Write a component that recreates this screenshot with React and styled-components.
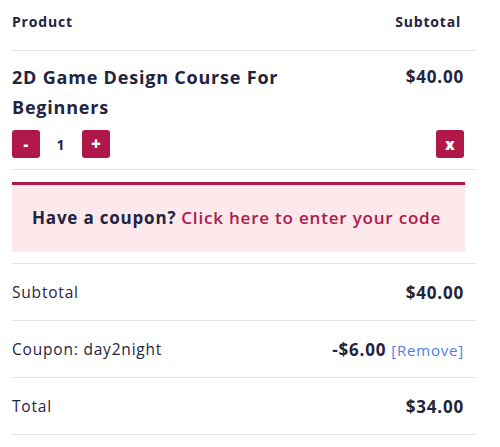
import React, { useState } from "react";
import styled, { createGlobalStyle } from "styled-components";

const GlobalStyle = createGlobalStyle`
  body {
    margin: 0;
    background: #ffffff;
    font-family: "Open Sans", "Noto Sans", sans-serif;
    letter-spacing: 0.8px;
    color: #1f2440;
  }
`;

const brand = "#b0184a";
const line = "#e6e6e6";

const Wrapper = styled.div`
  width: 465px;
  margin-left: 12px;
`;

const HeadRow = styled.div`
  display: flex;
  justify-content: space-between;
  height: 51px;
  box-sizing: border-box;
  padding: 12px 16px 0 0;
  border-bottom: 1px solid ${line};
  font-size: 14px;
  font-weight: 700;
`;

const ProductRow = styled.div`
  display: flex;
  justify-content: space-between;
  padding: 11px 13px 11px 0;
  border-bottom: 1px solid ${line};
`;

const ProductInfo = styled.div`
  display: flex;
  flex-direction: column;
  gap: 8px;
`;

const Title = styled.div`
  width: 300px;
  font-size: 18px;
  font-weight: 700;
  line-height: 30px;
`;

const Price = styled.div`
  font-size: 17px;
  font-weight: 700;
  line-height: 30px;
`;

const SideCol = styled.div`
  display: flex;
  flex-direction: column;
  justify-content: space-between;
  align-items: flex-end;
`;

const Qty = styled.div`
  display: flex;
  align-items: center;
`;

const QtyValue = styled.span`
  width: 42px;
  text-align: center;
  font-size: 14px;
  font-weight: 700;
`;

const SquareButton = styled.button`
  width: 28px;
  height: 28px;
  padding: 0;
  border: none;
  border-radius: 3px;
  background: ${brand};
  color: #ffffff;
  font-family: inherit;
  font-size: ${({ $big }) => ($big ? "17px" : "15px")};
  font-weight: 800;
  line-height: 28px;
  cursor: pointer;
`;

const CouponSection = styled.div`
  padding: 12px 0 11px;
  border-bottom: 1px solid ${line};
`;

const CouponBox = styled.div`
  width: 453px;
  box-sizing: border-box;
  height: 70px;
  display: flex;
  align-items: center;
  padding: 0 0 2px 20px;
  background: #fde8ec;
  border-top: 3px solid ${brand};
  font-size: 17px;
  font-weight: 700;
  color: #1f2440;
`;

const CouponLink = styled.a`
  color: ${brand};
  font-weight: 600;
  margin-left: 5px;
  text-decoration: none;
  cursor: pointer;
`;

const TotalRow = styled.div`
  display: flex;
  justify-content: space-between;
  align-items: center;
  height: 57px;
  box-sizing: border-box;
  padding-right: 13px;
  border-bottom: 1px solid ${line};
  font-size: 15.5px;
`;

const Amount = styled.span`
  font-size: 17px;
  font-weight: 700;
`;

const RemoveLink = styled.a`
  color: #4b7fe6;
  font-size: 15px;
  font-weight: 400;
  margin-left: 5px;
  cursor: pointer;
`;

export default function App() {
  const [qty, setQty] = useState(1);

  return (
    <>
      <GlobalStyle />
      <Wrapper>
        <HeadRow>
          <span>Product</span>
          <span>Subtotal</span>
        </HeadRow>
        <ProductRow>
          <ProductInfo>
            <Title>2D Game Design Course For Beginners</Title>
            <Qty>
              <SquareButton onClick={() => setQty(Math.max(1, qty - 1))}>-</SquareButton>
              <QtyValue>{qty}</QtyValue>
              <SquareButton $big onClick={() => setQty(qty + 1)}>+</SquareButton>
            </Qty>
          </ProductInfo>
          <SideCol>
            <Price>$40.00</Price>
            <SquareButton>x</SquareButton>
          </SideCol>
        </ProductRow>
        <CouponSection>
          <CouponBox>
            Have a coupon?
            <CouponLink>Click here to enter your code</CouponLink>
          </CouponBox>
        </CouponSection>
        <TotalRow>
          <span>Subtotal</span>
          <Amount>$40.00</Amount>
        </TotalRow>
        <TotalRow>
          <span>Coupon: day2night</span>
          <span>
            <Amount>-$6.00</Amount>
            <RemoveLink>[Remove]</RemoveLink>
          </span>
        </TotalRow>
        <TotalRow>
          <span>Total</span>
          <Amount>$34.00</Amount>
        </TotalRow>
      </Wrapper>
    </>
  );
}
